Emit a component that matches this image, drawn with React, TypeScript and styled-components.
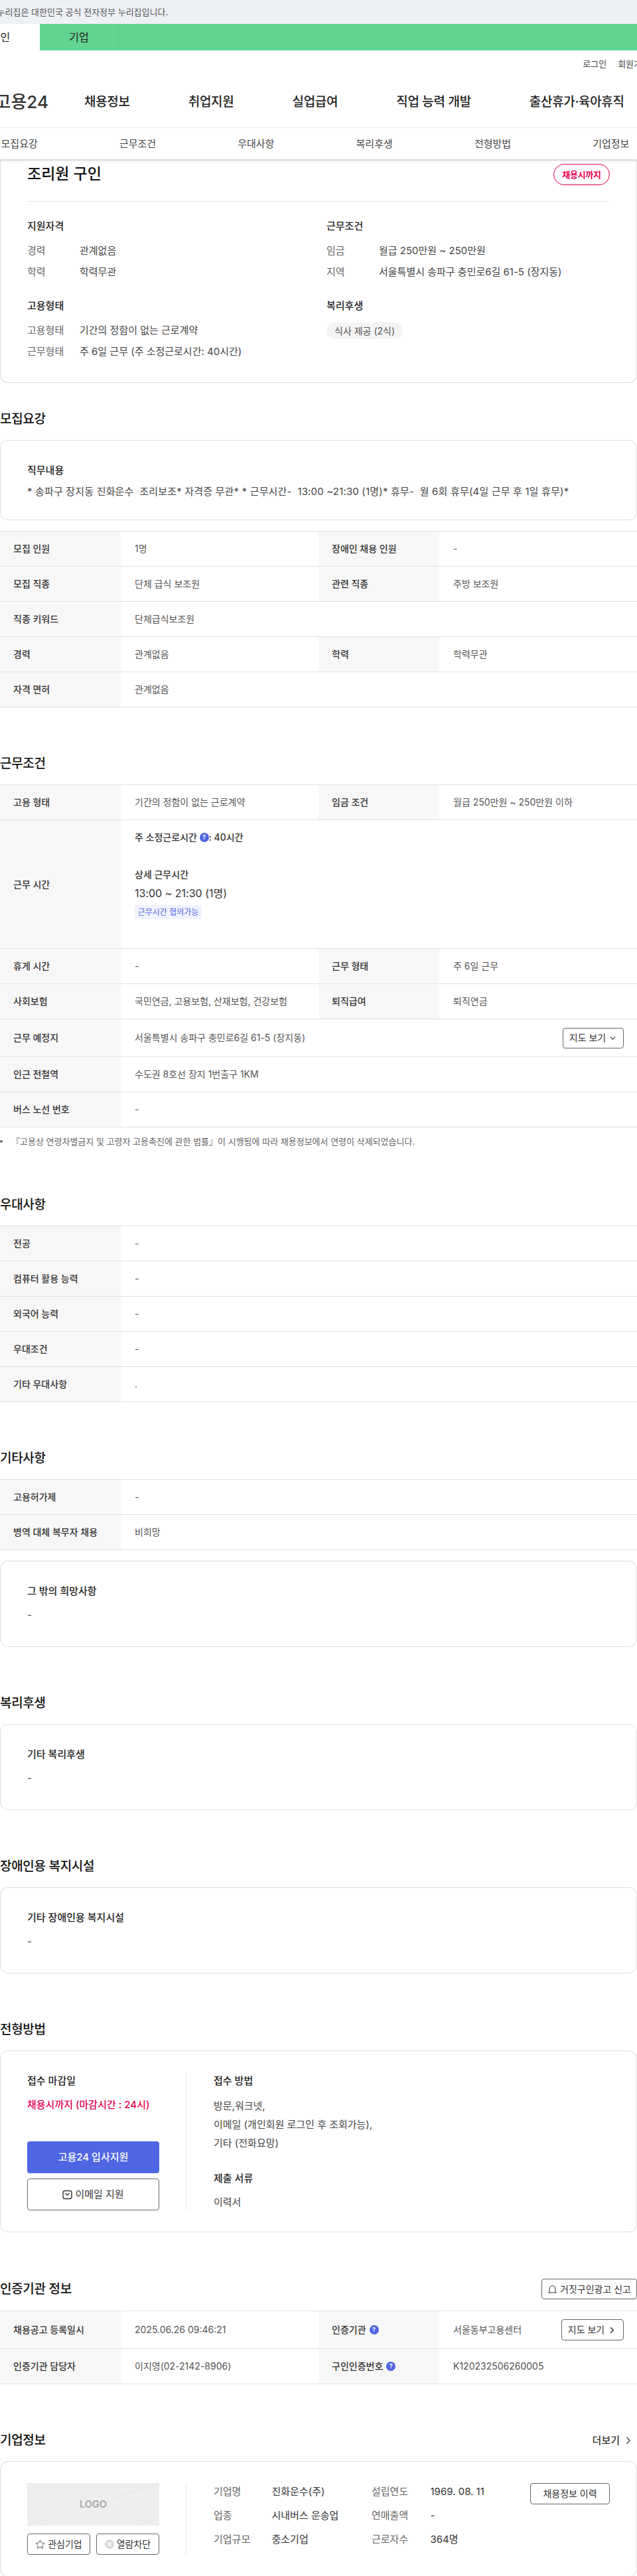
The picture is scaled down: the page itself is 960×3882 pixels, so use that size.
import React from 'react';
import styled, { createGlobalStyle } from 'styled-components';
import { ChevronDown, ChevronRight, Star } from 'lucide-react';

const red = '#e6004e';
const blue = '#4f66e3';
const line = '#e0e0e0';

const GlobalStyle = createGlobalStyle`
  html, body { margin: 0; padding: 0; background: #fff; }
  body {
    font-family: Inter, "Noto Sans CJK KR", sans-serif;
    color: #333;
    font-size: 15px;
    line-height: 24px;
  }
  * { box-sizing: border-box; }
`;

const Page = styled.div`
  width: 960px;
  height: 3882px;
  overflow: hidden;
`;

const Banner = styled.div`
  height: 36px;
  background: #edf0f5;
  color: #555;
  font-size: 13px;
  line-height: 36px;
  margin-left: -20px;
  white-space: pre;
`;

const TabBar = styled.div`
  height: 40px;
  display: flex;
  background: #62d491;
  margin-left: -59px;
`;

const AudienceTab = styled.div<{ $active?: boolean }>`
  width: 119px;
  text-align: center;
  font-size: 16px;
  line-height: 40px;
  color: #222;
  background: ${(p) => (p.$active ? '#fff' : 'transparent')};
  border-right: ${(p) => (p.$active ? 'none' : '1px solid #58c885')};
`;

const UtilRow = styled.div`
  height: 40px;
  display: flex;
  justify-content: flex-end;
  align-items: center;
  gap: 17px;
  margin-right: -19px;
  font-size: 13px;
  color: #444;
  white-space: nowrap;
`;

const NavRow = styled.div`
  height: 77px;
  display: flex;
  align-items: center;
  border-bottom: 1px solid #e8e8e8;
  white-space: nowrap;
  gap: 88px;
`;

const Logo = styled.div`
  width: 113px;
  margin-left: -40px;
  margin-right: -34px;
  text-align: right;
  font-size: 26px;
  font-weight: 500;
  color: #333;
`;

const NavItem = styled.div`
  font-size: 19px;
  font-weight: 500;
  letter-spacing: -0.3px;
  color: #222;
`;

const SubTabs = styled.div`
  position: relative;
  height: 48px;
  width: 1070px;
  margin-left: -60px;
  display: flex;
  align-items: center;
  z-index: 1;
  &::after {
    content: '';
    position: absolute;
    left: 0;
    right: 0;
    bottom: -1px;
    height: 2px;
    background: #ddd;
    box-shadow: 0 1px 2px rgba(0, 0, 0, 0.08);
  }
`;

const SubTab = styled.div`
  flex: 1;
  text-align: center;
  font-size: 15px;
  color: #444;
`;

const HeroCard = styled.div`
  border: 1px solid #ddd;
  border-top: none;
  border-radius: 0 0 12px 12px;
  padding: 6px 40px 34px;
`;

const HeroTop = styled.div`
  display: flex;
  justify-content: space-between;
  height: 57px;
  border-bottom: 1px solid #e8e8e8;
`;

const JobTitle = styled.h1`
  margin: 0;
  font-size: 23px;
  line-height: 30px;
  font-weight: 500;
  color: #111;
`;

const DeadlineBadge = styled.div`
  width: 85px;
  height: 32px;
  border: 1px solid ${red};
  border-radius: 16px;
  color: ${red};
  font-size: 13px;
  font-weight: 700;
  letter-spacing: -0.3px;
  line-height: 30px;
  text-align: center;
`;

const HeroGrid = styled.div`
  display: grid;
  grid-template-columns: 451px 1fr;
  padding-top: 25px;
  row-gap: 27px;
`;

const GroupTitle = styled.div`
  font-size: 15px;
  font-weight: 500;
  color: #222;
  margin-bottom: 13px;
`;

const InfoLine = styled.div`
  display: flex;
  & + & {
    margin-top: 8px;
  }
`;

const InfoKey = styled.span`
  width: 79px;
  color: #666;
`;

const InfoVal = styled.span`
  color: #444;
`;

const Chip = styled.div`
  display: inline-block;
  height: 25px;
  padding: 0 12px;
  border-radius: 13px;
  background: #f4f4f4;
  color: #555;
  font-size: 14px;
  line-height: 25px;
`;

const Section = styled.section<{ $top?: number }>`
  margin-top: ${(p) => p.$top ?? 71}px;
`;

const SectionHead = styled.div`
  min-height: 28px;
  margin-bottom: 17px;
  display: flex;
  justify-content: space-between;
  align-items: center;
`;

const SectionTitle = styled.h2`
  margin: 0;
  font-size: 19px;
  font-weight: 500;
  letter-spacing: -0.3px;
  line-height: 28px;
  color: #111;
`;

const MoreLink = styled.div`
  display: flex;
  align-items: center;
  gap: 4px;
  margin-right: 4px;
  font-size: 15px;
  font-weight: 500;
  color: #333;
`;

const Box = styled.div<{ $h?: number; $mt?: number }>`
  height: ${(p) => p.$h ?? 130}px;
  margin-top: ${(p) => p.$mt ?? 0}px;
  border: 1px solid #ddd;
  border-radius: 12px;
  padding: 33px 40px 0;
`;

const BoxTitle = styled.div<{ $gap?: number }>`
  font-size: 15px;
  font-weight: 500;
  color: #222;
  margin-bottom: ${(p) => p.$gap ?? 12}px;
`;

const BoxText = styled.div`
  font-size: 15px;
  color: #444;
  white-space: pre;
`;

const DutyText = styled(BoxText)`
  letter-spacing: 0.17px;
`;

const Table = styled.div<{ $mt?: number }>`
  margin-top: ${(p) => p.$mt ?? 0}px;
  border-top: 1px solid ${line};
`;

const Row = styled.div<{ $min?: number }>`
  display: grid;
  grid-template-columns: 182px 298px 182px 1fr;
  min-height: ${(p) => p.$min ?? 53}px;
  border-bottom: 1px solid ${line};
`;

const Label = styled.div`
  display: flex;
  align-items: center;
  gap: 5px;
  padding-left: 20px;
  background: #f7f7f7;
  font-size: 14px;
  font-weight: 500;
  color: #333;
`;

const Value = styled.div<{ $wide?: boolean }>`
  display: flex;
  align-items: center;
  justify-content: space-between;
  padding: 0 20px 0 21px;
  font-size: 14px;
  color: #555;
  grid-column: ${(p) => (p.$wide ? 'span 3' : 'auto')};
`;

const HoursCell = styled.div`
  grid-column: span 3;
  padding: 14px 21px 44px;
  font-size: 14px;
  color: #333;
`;

const HoursWeekly = styled.div`
  display: flex;
  align-items: center;
  font-weight: 500;
  margin-bottom: 32px;
`;

const HoursTitle = styled.div`
  font-weight: 500;
`;

const HoursTime = styled.div`
  margin-top: 4px;
  font-size: 16px;
`;

const HoursChip = styled.div`
  margin-top: 6px;
  width: 101px;
  height: 21px;
  border-radius: 3px;
  background: #f0f2fd;
  color: ${blue};
  font-size: 12px;
  line-height: 21px;
  text-align: center;
`;

const Help = styled.span`
  display: inline-flex;
  align-items: center;
  justify-content: center;
  flex: none;
  width: 14px;
  height: 14px;
  border-radius: 50%;
  background: ${blue};
  color: #fff;
  font-size: 9px;
  font-weight: 700;
  line-height: 14px;
`;

const OutlineButton = styled.button<{ $w: number; $h?: number }>`
  display: inline-flex;
  align-items: center;
  justify-content: center;
  gap: 4px;
  flex: none;
  width: ${(p) => p.$w}px;
  height: ${(p) => p.$h ?? 32}px;
  padding: 0;
  background: #fff;
  border: 1px solid #666;
  border-radius: 4px;
  font: inherit;
  font-size: 14px;
  color: #333;
`;

const Note = styled.div`
  display: flex;
  align-items: center;
  gap: 13px;
  margin-top: 11px;
  font-size: 13px;
  line-height: 20px;
  color: #666;
  &::before {
    content: '';
    width: 4px;
    height: 4px;
    border-radius: 50%;
    background: #666;
  }
`;

const SplitCard = styled.div`
  display: flex;
  border: 1px solid #ddd;
  border-radius: 12px;
  padding: 32px 40px;
`;

const SideCol = styled.div`
  width: 199px;
  flex: none;
  margin-right: 40px;
  display: flex;
  flex-direction: column;
`;

const MainCol = styled.div<{ $h?: number }>`
  flex: 1;
  height: ${(p) => p.$h ?? 208}px;
  border-left: 1px solid #e8e8e8;
  padding-left: 41px;
`;

const ColTitle = styled.div`
  font-size: 15px;
  font-weight: 500;
  color: #222;
  margin-bottom: 12px;
  padding-top: 1px;
`;

const DeadlineText = styled.div`
  color: ${red};
  font-weight: 500;
  font-size: 15px;
`;

const ApplyStack = styled.div`
  margin-top: auto;
  display: flex;
  flex-direction: column;
  gap: 8px;
`;

const ApplyButton = styled.button`
  height: 48px;
  border: none;
  border-radius: 4px;
  background: ${blue};
  color: #fff;
  font: inherit;
  font-size: 15px;
  font-weight: 500;
`;

const EmailButton = styled.button`
  height: 48px;
  display: flex;
  align-items: center;
  justify-content: center;
  gap: 4px;
  background: #fff;
  border: 1px solid #666;
  border-radius: 4px;
  font: inherit;
  font-size: 15px;
  color: #333;
`;

const MethodLines = styled.div`
  font-size: 15px;
  line-height: 28px;
  color: #444;
  margin-bottom: 26px;
`;

const LogoBox = styled.div`
  height: 64px;
  display: flex;
  align-items: center;
  justify-content: center;
  background:
    linear-gradient(to top right, transparent calc(50% - 0.6px), #e0e0e0 50%, transparent calc(50% + 0.6px)),
    linear-gradient(to bottom right, transparent calc(50% - 0.6px), #e0e0e0 50%, transparent calc(50% + 0.6px)),
    #eeeeee;
`;

const LogoWord = styled.span`
  padding: 0 7px;
  background: #eeeeee;
  color: #a8a8a8;
  font-size: 14.5px;
  font-weight: 600;
  line-height: 24px;
`;

const CompanyActions = styled.div`
  display: flex;
  justify-content: space-between;
  margin-top: 12px;
`;

const CompanyMain = styled.div`
  display: flex;
  justify-content: space-between;
  flex: 1;
`;

const CompanyGrid = styled.div`
  display: grid;
  grid-template-columns: 87.5px 150.5px 88.5px 140px;
  row-gap: 12px;
  align-content: start;
  padding-top: 1px;
  font-size: 15px;
`;

const CompanyKey = styled.span`
  color: #666;
`;

const CompanyVal = styled.span`
  color: #333;
`;

const BlockDot = styled.span`
  display: inline-flex;
  width: 14px;
  height: 14px;
  border-radius: 50%;
  background: #d8d8d8;
  color: #fff;
  align-items: center;
  justify-content: center;
`;

const MailIcon = () => (
  <svg width="15" height="15" viewBox="0 0 15 15" fill="none" stroke="#333" strokeWidth="1.4">
    <rect x="1" y="1.5" width="13" height="12" rx="3" />
    <path d="M4.5 5.5l3 2.6 3-2.6" strokeLinecap="round" strokeLinejoin="round" />
  </svg>
);

const ReportIcon = () => (
  <svg width="15" height="15" viewBox="0 0 15 15" fill="none" stroke="#333" strokeWidth="1">
    <path d="M3 13V7a4.5 4.5 0 0 1 9 0v6" />
    <path d="M1 13h13" />
  </svg>
);

const BlockIcon = () => (
  <BlockDot>
    <svg width="8" height="8" viewBox="0 0 8 8" stroke="#fff" strokeWidth="1.4">
      <path d="M1 1l6 6M7 1L1 7" />
    </svg>
  </BlockDot>
);

const welfareBoxes = [
  { heading: '복리후생', title: '기타 복리후생' },
  { heading: '장애인용 복지시설', title: '기타 장애인용 복지시설' },
];

const preferRows = ['전공', '컴퓨터 활용 능력', '외국어 능력', '우대조건'];

export default function App() {
  return (
    <Page>
      <GlobalStyle />
      <Banner>이 누리집은 대한민국 공식 전자정부 누리집입니다.</Banner>
      <TabBar>
        <AudienceTab $active>개인</AudienceTab>
        <AudienceTab>기업</AudienceTab>
      </TabBar>
      <UtilRow>
        <span>로그인</span>
        <span>회원가입</span>
      </UtilRow>
      <NavRow>
        <Logo>고용24</Logo>
        <NavItem>채용정보</NavItem>
        <NavItem>취업지원</NavItem>
        <NavItem>실업급여</NavItem>
        <NavItem>직업 능력 개발</NavItem>
        <NavItem>출산휴가·육아휴직</NavItem>
      </NavRow>
      <SubTabs>
        <SubTab>모집요강</SubTab>
        <SubTab>근무조건</SubTab>
        <SubTab>우대사항</SubTab>
        <SubTab>복리후생</SubTab>
        <SubTab>전형방법</SubTab>
        <SubTab>기업정보</SubTab>
      </SubTabs>

      <HeroCard>
        <HeroTop>
          <JobTitle>조리원 구인</JobTitle>
          <DeadlineBadge>채용시까지</DeadlineBadge>
        </HeroTop>
        <HeroGrid>
          <div>
            <GroupTitle>지원자격</GroupTitle>
            <InfoLine><InfoKey>경력</InfoKey><InfoVal>관계없음</InfoVal></InfoLine>
            <InfoLine><InfoKey>학력</InfoKey><InfoVal>학력무관</InfoVal></InfoLine>
          </div>
          <div>
            <GroupTitle>근무조건</GroupTitle>
            <InfoLine><InfoKey>임금</InfoKey><InfoVal>월급 250만원 ~ 250만원</InfoVal></InfoLine>
            <InfoLine><InfoKey>지역</InfoKey><InfoVal>서울특별시 송파구 충민로6길 61-5 (장지동)</InfoVal></InfoLine>
          </div>
          <div>
            <GroupTitle>고용형태</GroupTitle>
            <InfoLine><InfoKey>고용형태</InfoKey><InfoVal>기간의 정함이 없는 근로계약</InfoVal></InfoLine>
            <InfoLine><InfoKey>근무형태</InfoKey><InfoVal>주 6일 근무 (주 소정근로시간: 40시간)</InfoVal></InfoLine>
          </div>
          <div>
            <GroupTitle>복리후생</GroupTitle>
            <Chip>식사 제공 (2식)</Chip>
          </div>
        </HeroGrid>
      </HeroCard>

      <Section $top={41}>
        <SectionHead><SectionTitle>모집요강</SectionTitle></SectionHead>
        <Box $h={121}>
          <BoxTitle $gap={8}>직무내용</BoxTitle>
          <DutyText>* 송파구 장지동 진화운수  조리보조* 자격증 무관* * 근무시간-  13:00 ~21:30 (1명)* 휴무-  월 6회 휴무(4일 근무 후 1일 휴무)*</DutyText>
        </Box>
        <Table $mt={16}>
          <Row>
            <Label>모집 인원</Label><Value>1명</Value>
            <Label>장애인 채용 인원</Label><Value>-</Value>
          </Row>
          <Row>
            <Label>모집 직종</Label><Value>단체 급식 보조원</Value>
            <Label>관련 직종</Label><Value>주방 보조원</Value>
          </Row>
          <Row>
            <Label>직종 키워드</Label><Value $wide>단체급식보조원</Value>
          </Row>
          <Row>
            <Label>경력</Label><Value>관계없음</Value>
            <Label>학력</Label><Value>학력무관</Value>
          </Row>
          <Row>
            <Label>자격 면허</Label><Value $wide>관계없음</Value>
          </Row>
        </Table>
      </Section>

      <Section>
        <SectionHead><SectionTitle>근무조건</SectionTitle></SectionHead>
        <Table>
          <Row>
            <Label>고용 형태</Label><Value>기간의 정함이 없는 근로계약</Value>
            <Label>임금 조건</Label><Value>월급 250만원 ~ 250만원 이하</Value>
          </Row>
          <Row>
            <Label>근무 시간</Label>
            <HoursCell>
              <HoursWeekly>주 소정근로시간&nbsp;<Help>?</Help>: 40시간</HoursWeekly>
              <HoursTitle>상세 근무시간</HoursTitle>
              <HoursTime>13:00 ~ 21:30 (1명)</HoursTime>
              <HoursChip>근무시간 협의가능</HoursChip>
            </HoursCell>
          </Row>
          <Row>
            <Label>휴게 시간</Label><Value>-</Value>
            <Label>근무 형태</Label><Value>주 6일 근무</Value>
          </Row>
          <Row>
            <Label>사회보험</Label><Value>국민연금, 고용보험, 산재보험, 건강보험</Value>
            <Label>퇴직급여</Label><Value>퇴직연금</Value>
          </Row>
          <Row $min={57}>
            <Label>근무 예정지</Label>
            <Value $wide>
              서울특별시 송파구 충민로6길 61-5 (장지동)
              <OutlineButton $w={92} $h={31}>지도 보기 <ChevronDown size={13} /></OutlineButton>
            </Value>
          </Row>
          <Row>
            <Label>인근 전철역</Label><Value $wide>수도권 8호선 장지 1번출구 1KM</Value>
          </Row>
          <Row>
            <Label>버스 노선 번호</Label><Value $wide>-</Value>
          </Row>
        </Table>
        <Note>『고용상 연령차별금지 및 고령자 고용촉진에 관한 법률』이 시행됨에 따라 채용정보에서 연령이 삭제되었습니다.</Note>
      </Section>

      <Section $top={72}>
        <SectionHead><SectionTitle>우대사항</SectionTitle></SectionHead>
        <Table>
          {preferRows.map((name) => (
            <Row key={name}>
              <Label>{name}</Label><Value $wide>-</Value>
            </Row>
          ))}
          <Row>
            <Label>기타 우대사항</Label><Value $wide>.</Value>
          </Row>
        </Table>
      </Section>

      <Section>
        <SectionHead><SectionTitle>기타사항</SectionTitle></SectionHead>
        <Table>
          <Row>
            <Label>고용허가제</Label><Value $wide>-</Value>
          </Row>
          <Row>
            <Label>병역 대체 복무자 채용</Label><Value $wide>비희망</Value>
          </Row>
        </Table>
        <Box $mt={16}>
          <BoxTitle>그 밖의 희망사항</BoxTitle>
          <BoxText>-</BoxText>
        </Box>
      </Section>

      {welfareBoxes.map((item) => (
        <Section key={item.heading}>
          <SectionHead><SectionTitle>{item.heading}</SectionTitle></SectionHead>
          <Box>
            <BoxTitle>{item.title}</BoxTitle>
            <BoxText>-</BoxText>
          </Box>
        </Section>
      ))}

      <Section>
        <SectionHead><SectionTitle>전형방법</SectionTitle></SectionHead>
        <SplitCard>
          <SideCol>
            <ColTitle>접수 마감일</ColTitle>
            <DeadlineText>채용시까지 (마감시간 : 24시)</DeadlineText>
            <ApplyStack>
              <ApplyButton>고용24 입사지원</ApplyButton>
              <EmailButton><MailIcon />이메일 지원</EmailButton>
            </ApplyStack>
          </SideCol>
          <MainCol>
            <ColTitle>접수 방법</ColTitle>
            <MethodLines>
              방문,워크넷,<br />
              이메일 (개인회원 로그인 후 조회가능),<br />
              기타 (전화요망)
            </MethodLines>
            <ColTitle>제출 서류</ColTitle>
            <BoxText>이력서</BoxText>
          </MainCol>
        </SplitCard>
      </Section>

      <Section $top={70}>
        <SectionHead>
          <SectionTitle>인증기관 정보</SectionTitle>
          <OutlineButton $w={144} $h={31}><ReportIcon />거짓구인광고 신고</OutlineButton>
        </SectionHead>
        <Table>
          <Row $min={57}>
            <Label>채용공고 등록일시</Label><Value>2025.06.26 09:46:21</Value>
            <Label>인증기관<Help>?</Help></Label>
            <Value>
              서울동부고용센터
              <OutlineButton $w={94}>지도 보기 <ChevronRight size={15} strokeWidth={2.4} /></OutlineButton>
            </Value>
          </Row>
          <Row>
            <Label>인증기관 담당자</Label><Value>이지영(02-2142-8906)</Value>
            <Label>구인인증번호<Help>?</Help></Label><Value>K120232506260005</Value>
          </Row>
        </Table>
      </Section>

      <Section>
        <SectionHead>
          <SectionTitle>기업정보</SectionTitle>
          <MoreLink>더보기 <ChevronRight size={18} strokeWidth={1.5} /></MoreLink>
        </SectionHead>
        <SplitCard>
          <SideCol>
            <LogoBox><LogoWord>LOGO</LogoWord></LogoBox>
            <CompanyActions>
              <OutlineButton $w={95}><Star size={15} strokeWidth={1.4} />관심기업</OutlineButton>
              <OutlineButton $w={95}><BlockIcon />열람차단</OutlineButton>
            </CompanyActions>
          </SideCol>
          <MainCol $h={108}>
            <CompanyMain>
              <CompanyGrid>
                <CompanyKey>기업명</CompanyKey><CompanyVal>진화운수(주)</CompanyVal>
                <CompanyKey>설립연도</CompanyKey><CompanyVal>1969. 08. 11</CompanyVal>
                <CompanyKey>업종</CompanyKey><CompanyVal>시내버스 운송업</CompanyVal>
                <CompanyKey>연매출액</CompanyKey><CompanyVal>-</CompanyVal>
                <CompanyKey>기업규모</CompanyKey><CompanyVal>중소기업</CompanyVal>
                <CompanyKey>근로자수</CompanyKey><CompanyVal>364명</CompanyVal>
              </CompanyGrid>
              <OutlineButton $w={120}>채용정보 이력</OutlineButton>
            </CompanyMain>
          </MainCol>
        </SplitCard>
      </Section>
    </Page>
  );
}
